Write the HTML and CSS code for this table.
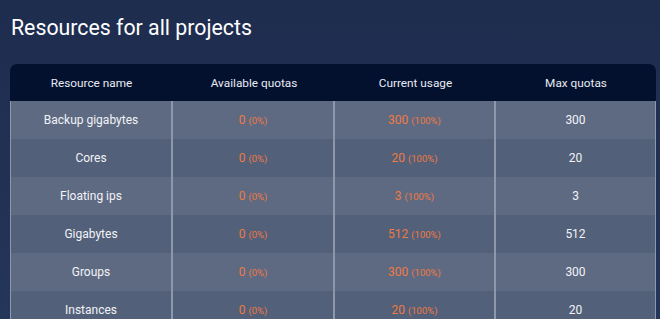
FILE: index.html
```html
<!DOCTYPE html>
<html>
<head>
<meta charset="utf-8">
<link rel="stylesheet" href="styles.css">
</head>
<body>
<div class="page">
  <h1 class="title">Resources for all projects</h1>
  <table class="quotas">
    <colgroup><col class="c1"><col class="c2"><col class="c3"><col class="c4"></colgroup>
    <thead>
      <tr><th>Resource name</th><th>Available quotas</th><th>Current usage</th><th>Max quotas</th></tr>
    </thead>
    <tbody>
      <tr><td>Backup gigabytes</td><td class="warn">0 <small>(0%)</small></td><td class="warn">300 <small>(100%)</small></td><td>300</td></tr>
      <tr><td>Cores</td><td class="warn">0 <small>(0%)</small></td><td class="warn">20 <small>(100%)</small></td><td>20</td></tr>
      <tr><td>Floating ips</td><td class="warn">0 <small>(0%)</small></td><td class="warn">3 <small>(100%)</small></td><td>3</td></tr>
      <tr><td>Gigabytes</td><td class="warn">0 <small>(0%)</small></td><td class="warn">512 <small>(100%)</small></td><td>512</td></tr>
      <tr><td>Groups</td><td class="warn">0 <small>(0%)</small></td><td class="warn">300 <small>(100%)</small></td><td>300</td></tr>
      <tr><td>Instances</td><td class="warn">0 <small>(0%)</small></td><td class="warn">20 <small>(100%)</small></td><td>20</td></tr>
    </tbody>
  </table>
</div>
</body>
</html>
```
FILE: styles.css
```css
html, body {
  margin: 0;
  padding: 0;
}
body {
  background: linear-gradient(180deg, #1e2c4e 0%, #24365a 100%);
  min-height: 319px;
  font-family: Roboto, "Liberation Sans", sans-serif;
  overflow: hidden;
}
.page {
  padding: 15px 4px 0 10px;
}
.title {
  margin: 0 0 23px 1px;
  font-weight: 400;
  font-size: 21.3px;
  line-height: 26px;
  color: #ffffff;
}
.quotas {
  width: 646px;
  border-collapse: separate;
  border-spacing: 0;
  table-layout: fixed;
}
.c1 { width: 163px; }
.c2 { width: 162px; }
.c3 { width: 161px; }
.c4 { width: 160px; }
.quotas th {
  background: #03112f;
  color: #e8ebf2;
  font-weight: 400;
  font-size: 11.8px;
  height: 37px;
  padding: 0;
  text-align: center;
}
.quotas th:first-child { border-top-left-radius: 7px; }
.quotas th:last-child { border-top-right-radius: 7px; }
.quotas td {
  height: 38px;
  padding: 0;
  text-align: center;
  color: #f1f3f7;
  font-size: 12px;
  border-right: 2px solid #8e98aa;
}
.quotas td:first-child { border-left: 1px solid #8e98aa; }
.quotas td:last-child { border-right: 1px solid #8e98aa; }
.quotas tbody tr:nth-child(odd) td { background: #5e6a82; }
.quotas tbody tr:nth-child(even) td { background: #536079; }
.quotas td.warn { color: #ed7a44; }
.quotas td.warn small { font-size: 9.5px; }
```
